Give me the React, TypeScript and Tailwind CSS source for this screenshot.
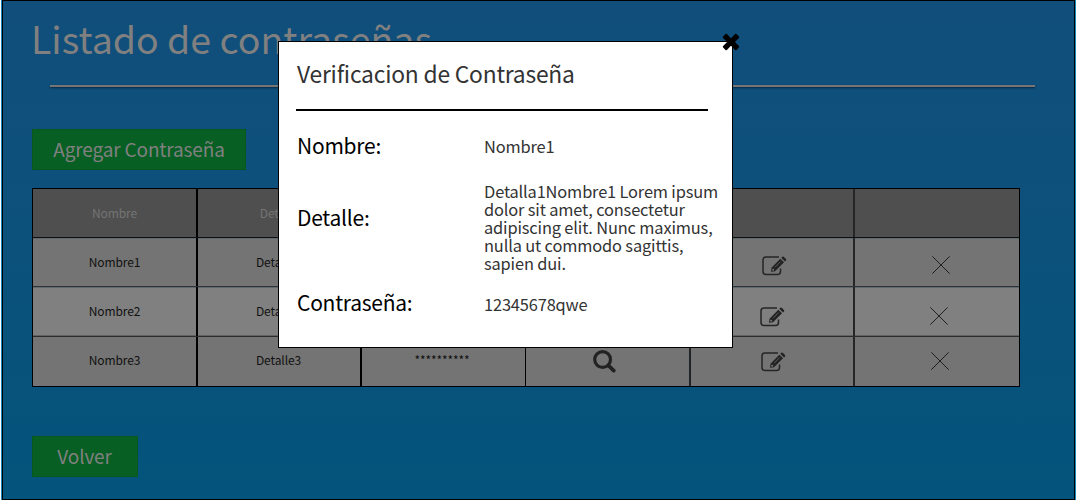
const rows = [
  { name: "Nombre1", detail: "Detalle1", frame: "h-[49px] bg-[#747474] border-b border-[#303234] shadow-[inset_0_1px_0_#5d6a72]", edit: "pl-[71px] pt-[18px]", cross: "pl-[77px] pt-[18px]" },
  { name: "Nombre2", detail: "Detalle2", frame: "h-[50px] bg-[#808080] border-b border-[#2c2c2c] shadow-[inset_0_1px_0_#5d6a72,inset_0_-1px_0_#5f6162]", edit: "pl-[69px] pt-[20px]", cross: "pl-[75px] pt-[20px]" },
  { name: "Nombre3", detail: "Detalle3", frame: "h-[49px] bg-[#747474]", edit: "pl-[70px] pt-[15px]", cross: "pl-[76px] pt-[15px]" },
];

const columns = "grid grid-cols-[165px_164px_164px_165px_164px_164px]";
const lines = [
  "border-r-2 border-black",
  "border-r-2 border-black",
  "border-r border-black",
  "border-r-2 border-[#202426]",
  "border-r-2 border-[#262626]",
  "",
];

const term = "text-[21px] leading-[32px] tracking-[-0.25px] text-black";
const value = "text-[16.4px] leading-[18px] tracking-[-0.15px] whitespace-nowrap";
const button = "block h-[41px] border border-[#08571b] bg-[#075f24] pb-[2px] text-[19px] leading-[37px] tracking-[-0.15px]";

function EditIcon() {
  return (
    <svg width="25" height="20" viewBox="0 0 25 20" fill="none">
      <path d="M17 1H4Q1 1 1 4V15.5Q1 18.5 4 18.5H15.5Q18.5 18.5 18.5 15.5V12.5" stroke="#252525" strokeWidth="1.5" />
      <path d="M9.5 11.7 18.3 2.7 22 6.2 13 15.2 9.1 15.8Z" fill="#222" />
      <path d="m19.3 1.8 1-1q.7-.6 1.4 0l2.3 2.3q.6.7 0 1.3l-1 1Z" fill="#222" />
      <path d="m13 11.3 5.6-5.7" stroke="#747474" strokeWidth=".7" />
      <circle cx="11.2" cy="13.7" r="1" fill="#777" />
    </svg>
  );
}

function SearchIcon() {
  return (
    <svg className="mr-[6px]" width="23" height="23" viewBox="0 0 23 23" fill="none" stroke="#222">
      <circle cx="9.6" cy="9.5" r="7.9" strokeWidth="3.2" />
      <path d="m15.5 15.5 5.2 5.1" strokeWidth="3.8" strokeLinecap="round" />
    </svg>
  );
}

function ThinCross() {
  return (
    <svg width="18" height="18" viewBox="0 0 18 18" stroke="#202020" strokeWidth="1">
      <path d="m.3.3 17.4 17.4M17.7.3.3 17.7" />
    </svg>
  );
}

function Modal() {
  return (
    <section className="absolute left-[278px] top-[41px] h-[307px] w-[455px] border border-black bg-white text-[#333]">
      <button className="absolute -top-[9px] right-[-8px]" aria-label="Cerrar">
        <svg width="18" height="18" viewBox="0 0 18 18" fill="#000" stroke="#000" strokeWidth="2" strokeLinejoin="round">
          <path d="m4.2 1.8 4.8 4.8 4.8-4.8 2.4 2.4L11.4 9l4.8 4.8-2.4 2.4L9 11.4l-4.8 4.8-2.4-2.4L6.6 9 1.8 4.2Z" />
        </svg>
      </button>
      <div className="pl-[17px]">
        <h2 className="ml-px pt-[16px] text-[22.8px] leading-[32px] tracking-[-0.2px]">Verificacion de Contraseña</h2>
        <div className="mt-[19px] h-[2px] w-[412px] bg-black" />
        <dl className="ml-px grid grid-cols-[187px_1fr] grid-rows-[52px_110px_46px] items-start">
          <dt className={`mt-[18px] ${term}`}>Nombre:</dt>
          <dd className={`mt-[26px] ${value}`}>Nombre1</dd>
          <dt className={`mt-[38px] ${term}`}>Detalle:</dt>
          <dd className={`mt-[19px] ${value}`}>
            Detalla1Nombre1 Lorem ipsum<br />dolor sit amet, consectetur<br />adipiscing elit. Nunc maximus,<br />nulla ut commodo sagittis,<br />sapien dui.
          </dd>
          <dt className={`mt-[13px] ${term}`}>Contraseña:</dt>
          <dd className={`mt-[22px] ${value}`}>12345678qwe</dd>
        </dl>
      </div>
    </section>
  );
}

export default function App() {
  return (
    <div className="relative h-[501px] w-[1076px] overflow-hidden bg-white font-['Noto_Sans_CJK_JP',sans-serif]">
      <div className="ml-px h-[500px] bg-[#1688bd] px-px">
        <main className="h-[500px] w-[1073px] border border-black bg-linear-to-b from-[#114e7b] to-[#03547c] pl-[29px] text-[#808080]">
          <h1 className="h-[84px] pt-[12px] text-[37.5px] leading-[50px]"><span className="-ml-px">Listado de contraseñas</span></h1>
          <div className="ml-[18px] h-[2px] w-[985px] bg-[#757575] shadow-[0_1px_2px_rgba(0,0,0,0.5)]" />
          <button className={`mt-[42px] w-[214px] ${button}`}>Agregar Contraseña</button>
          <div className="mt-[18px] w-[988px] border border-black text-center text-[12px] tracking-[-0.1px] text-[#111]">
            <div className={`${columns} h-[49px] border-b border-[#101010] bg-[#4f4f4f] leading-[48px] text-[#747474]`}>
              {["Nombre", "Detalle", "Contraseña", "", "", ""].map((label, i) => (
                <div key={i} className={lines[i]}>{label}</div>
              ))}
            </div>
            {rows.map((row, i) => (
              <div key={row.name} className={`${columns} ${row.frame} ${i < 2 ? "leading-[48px]" : "leading-[46px]"}`}>
                <div className={lines[0]}>{row.name}</div>
                <div className={`${lines[1]} pr-px`}>{row.detail}</div>
                <div className={`${lines[2]} pr-[3px]`}>**********</div>
                <div className={`${lines[3]} flex justify-center pt-[13px]`}><SearchIcon /></div>
                <div className={`${lines[4]} ${row.edit}`}><EditIcon /></div>
                <div className={row.cross}><ThinCross /></div>
              </div>
            ))}
          </div>
          <button className={`mt-[49px] w-[106px] pr-px ${button}`}>Volver</button>
        </main>
      </div>
      <Modal />
    </div>
  );
}
